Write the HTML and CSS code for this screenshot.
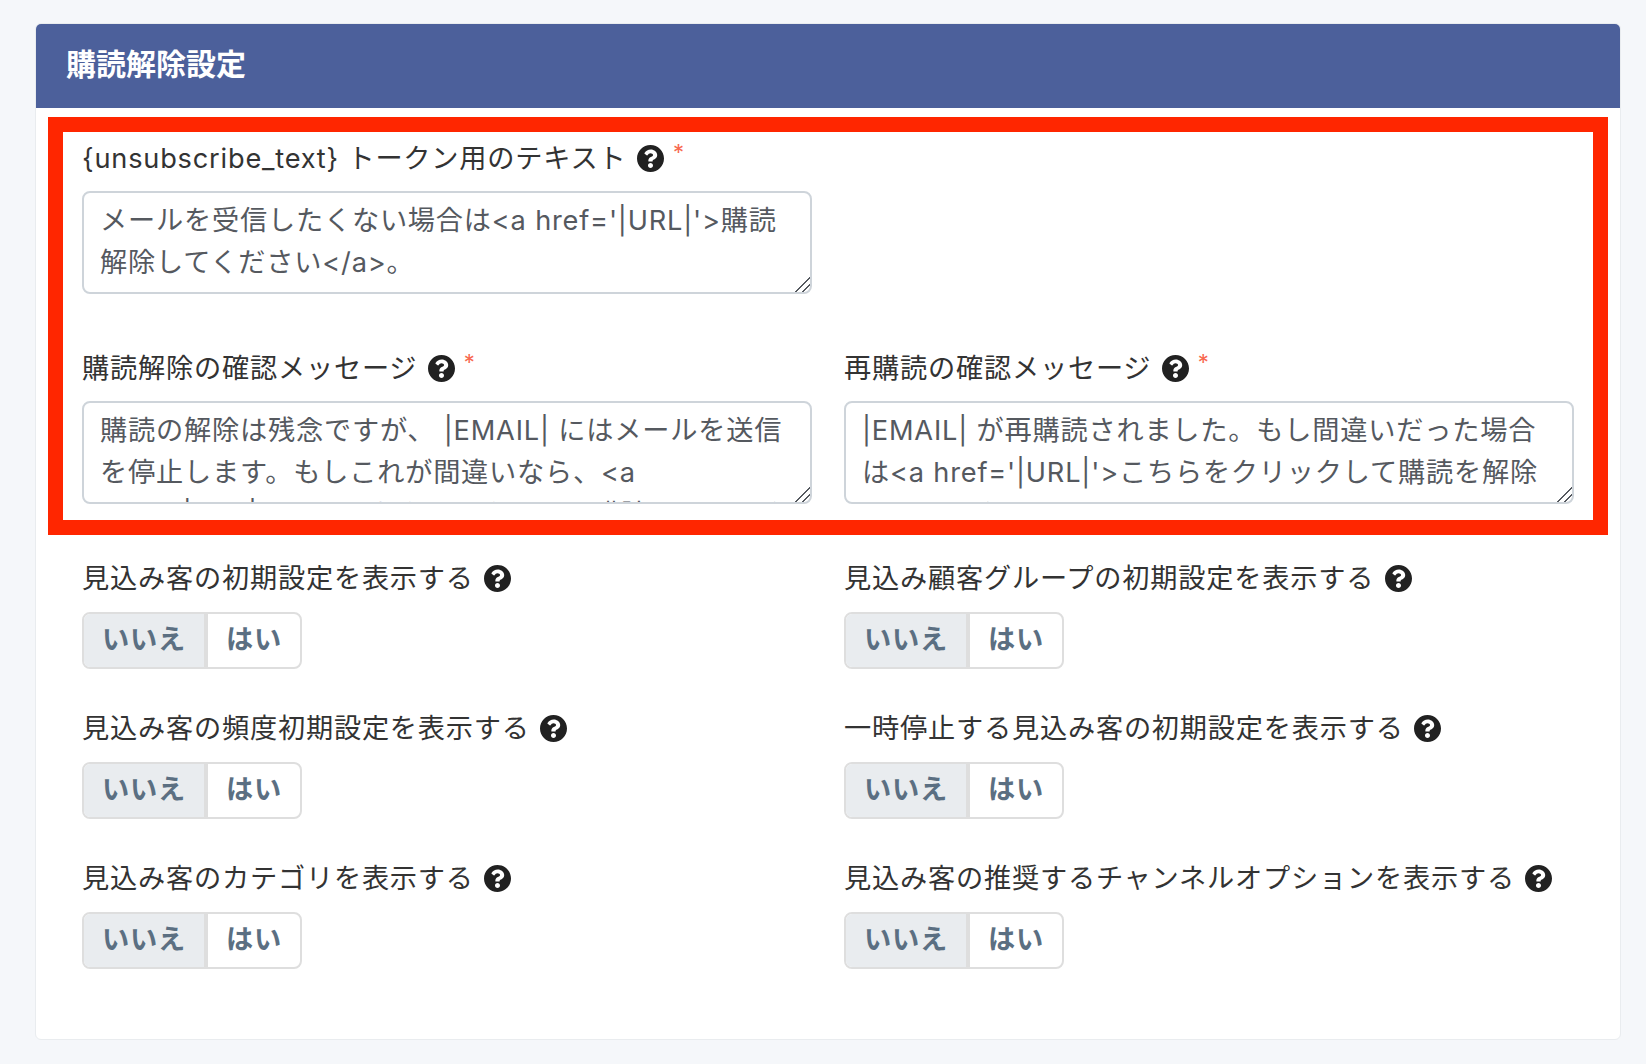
FILE: index.html
```html
<!DOCTYPE html>
<html lang="ja">
<head>
  <meta charset="UTF-8">
  <title>購読解除設定</title>
  <link rel="stylesheet" href="styles.css">
</head>
<body>

  <svg class="icon-defs" aria-hidden="true">
    <symbol id="help" viewBox="8 8 496 496">
      <path d="M504 256c0 136.997-111.043 248-248 248S8 392.997 8 256C8 119.083 119.043 8 256 8s248 111.083 248 248zM262.655 90c-54.497 0-89.255 22.957-116.549 63.758-3.536 5.286-2.353 12.415 2.715 16.258l34.699 26.31c5.205 3.947 12.621 3.008 16.665-2.122 17.864-22.658 30.113-35.797 57.303-35.797 20.429 0 45.698 13.148 45.698 32.958 0 14.976-12.363 22.667-32.534 33.976C247.128 238.528 216 254.941 216 296v4c0 6.627 5.373 12 12 12h56c6.627 0 12-5.373 12-12v-1.333c0-28.462 83.186-29.647 83.186-106.667 0-58.002-60.165-102-116.531-102zM256 338c-25.365 0-46 20.635-46 46 0 25.364 20.635 46 46 46s46-20.636 46-46c0-25.365-20.635-46-46-46z"/>
    </symbol>
  </svg>

  <div class="card">
    <div class="card-header">購読解除設定</div>

    <div class="highlight">
      <div class="field-grid text-grid">
        <div class="field">
          <label class="field-label">{unsubscribe_text} トークン用のテキスト <svg class="help-icon"><use href="#help"/></svg><span class="required">*</span></label>
          <textarea class="text-input">メールを受信したくない場合は&lt;a href='|URL|'&gt;購読解除してください&lt;/a&gt;。</textarea>
        </div>
        <div class="field"></div>
        <div class="field">
          <label class="field-label">購読解除の確認メッセージ <svg class="help-icon"><use href="#help"/></svg><span class="required">*</span></label>
          <textarea class="text-input">購読の解除は残念ですが、 |EMAIL| にはメールを送信を停止します。もしこれが間違いなら、&lt;a href='|URL|'&gt;こちらをクリックして再購読してください&lt;/a&gt;。</textarea>
        </div>
        <div class="field">
          <label class="field-label">再購読の確認メッセージ <svg class="help-icon"><use href="#help"/></svg><span class="required">*</span></label>
          <textarea class="text-input">|EMAIL| が再購読されました。もし間違いだった場合は&lt;a href='|URL|'&gt;こちらをクリックして購読を解除してください&lt;/a&gt;。</textarea>
        </div>
      </div>
    </div>

    <div class="field-grid toggle-grid">
      <div class="field">
        <label class="field-label">見込み客の初期設定を表示する <svg class="help-icon"><use href="#help"/></svg></label>
        <div class="btn-group"><span class="btn active">いいえ</span><span class="btn">はい</span></div>
      </div>
      <div class="field">
        <label class="field-label">見込み顧客グループの初期設定を表示する <svg class="help-icon"><use href="#help"/></svg></label>
        <div class="btn-group"><span class="btn active">いいえ</span><span class="btn">はい</span></div>
      </div>
      <div class="field">
        <label class="field-label">見込み客の頻度初期設定を表示する <svg class="help-icon"><use href="#help"/></svg></label>
        <div class="btn-group"><span class="btn active">いいえ</span><span class="btn">はい</span></div>
      </div>
      <div class="field">
        <label class="field-label">一時停止する見込み客の初期設定を表示する <svg class="help-icon"><use href="#help"/></svg></label>
        <div class="btn-group"><span class="btn active">いいえ</span><span class="btn">はい</span></div>
      </div>
      <div class="field">
        <label class="field-label">見込み客のカテゴリを表示する <svg class="help-icon"><use href="#help"/></svg></label>
        <div class="btn-group"><span class="btn active">いいえ</span><span class="btn">はい</span></div>
      </div>
      <div class="field">
        <label class="field-label">見込み客の推奨するチャンネルオプションを表示する <svg class="help-icon"><use href="#help"/></svg></label>
        <div class="btn-group"><span class="btn active">いいえ</span><span class="btn">はい</span></div>
      </div>
    </div>
  </div>

</body>
</html>
```

FILE: styles.css
```css
body {
  margin: 0;
  padding: 23px 25px 24px 35px;
  background: #f5f7fa;
  color: #333;
  font-family: Inter, "Noto Sans CJK JP", sans-serif;
  font-size: 27.2px;
  letter-spacing: 0.8px;
}
.icon-defs {
  display: none;
}
.card {
  background: #fff;
  border: 1px solid #e9ecef;
  border-radius: 6px;
  padding-bottom: 70px;
}
.card-header {
  background: #4c609b;
  color: #fff;
  height: 84px;
  line-height: 81px;
  padding-left: 30px;
  border-radius: 5px 5px 0 0;
  font-size: 30px;
  font-weight: 700;
  letter-spacing: 0;
}
.highlight {
  margin: 9px 12px 0;
  border: 15px solid #ff2600;
  padding: 0 19px 16px 19px;
}
.field-grid {
  display: grid;
  grid-template-columns: 730px 730px;
  column-gap: 32px;
}
.text-grid {
  row-gap: 48px;
}
.toggle-grid {
  row-gap: 39px;
  padding: 23px 0 0 46px;
}
.field-label {
  display: block;
  height: 42px;
  line-height: 42px;
  white-space: nowrap;
}
.text-grid .field-label {
  line-height: 40px;
}
.help-icon {
  width: 27px;
  height: 27px;
  fill: #212121;
  vertical-align: -4px;
  margin-left: 2px;
}
.required {
  color: #f8694f;
  font-size: 22px;
  margin-left: 9px;
  vertical-align: 8px;
}
.text-input {
  display: block;
  box-sizing: border-box;
  width: 100%;
  height: 103px;
  margin-top: 17px;
  padding: 7px 16px;
  border: 2px solid #ced4da;
  border-radius: 8px;
  color: #55595f;
  font: inherit;
  letter-spacing: inherit;
  line-height: 42px;
  overflow: hidden;
  resize: vertical;
}
.text-input::-webkit-resizer {
  background:
    linear-gradient(135deg, transparent 48%, #55595f 48%, #55595f 54%, transparent 54%) 0 0 / 15px 15px no-repeat,
    linear-gradient(135deg, transparent 72%, #55595f 72%, #55595f 78%, transparent 78%) 0 0 / 15px 15px no-repeat;
}
.btn-group {
  display: flex;
  width: fit-content;
  margin-top: 12px;
  height: 57px;
  box-sizing: border-box;
  border: 2px solid #dedede;
  border-radius: 8px;
  overflow: hidden;
}
.btn {
  display: flex;
  align-items: center;
  justify-content: center;
  box-sizing: border-box;
  padding-bottom: 8px;
  color: #5b6f82;
  font-weight: 700;
  width: 92px;
}
.btn.active {
  width: 124px;
  background: #e9ecef;
  border-right: 4px solid #dedede;
}
```
